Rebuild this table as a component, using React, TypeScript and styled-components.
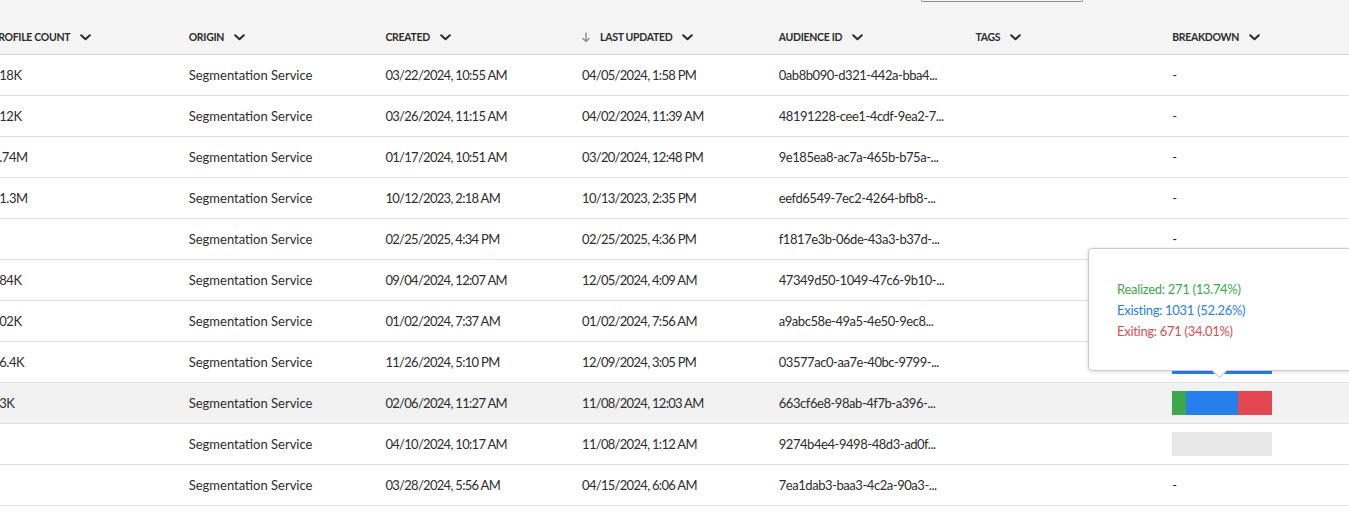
import React from "react";
import styled, { createGlobalStyle } from "styled-components";

const GlobalStyle = createGlobalStyle`
  html, body { margin: 0; padding: 0; background: #ffffff; overflow: hidden; }
  body { font-family: Lato, "Open Sans", sans-serif; color: #2c2c2c; }
`;

const COL = "196.7px";

const Page = styled.div`
  position: relative;
  width: 1349px;
  height: 512px;
  overflow: hidden;
  background: #ffffff;
`;

const Top = styled.div`
  background: #f5f5f5;
  height: 20px;
  display: flex;
`;

const SearchStub = styled.div`
  margin-left: 921px;
  width: 160px;
  height: 1px;
  border: 1px solid #8e8e8e;
  border-top: none;
  border-radius: 0 0 4px 4px;
`;

const Table = styled.div`
  margin-left: -8px;
  width: calc(${COL} * 7);
`;

const HeaderRow = styled.div`
  display: grid;
  grid-template-columns: repeat(7, ${COL});
  height: 34px;
  align-items: center;
  background: #f5f5f5;
  border-bottom: 1px solid #d3d3d3;
`;

const HeadCell = styled.div`
  display: flex;
  align-items: center;
  font-size: 10.5px;
  font-weight: 700;
  letter-spacing: -0.3px;
  color: #2c2c2c;
  text-transform: uppercase;
`;

const SortArrow = styled.span`
  display: inline-flex;
  width: 18px;
`;

const Chevron = styled.span`
  display: inline-flex;
  margin-left: 10px;
`;

const Row = styled.div<{ $hl?: boolean }>`
  display: grid;
  grid-template-columns: repeat(7, ${COL});
  height: 40px;
  align-items: center;
  background: ${(p) => (p.$hl ? "#f2f2f2" : "#ffffff")};
  border-bottom: 1px solid #e1e1e1;
`;

const Cell = styled.div<{ $tight?: number }>`
  font-size: 13px;
  letter-spacing: ${(p) => (p.$tight ? `-${p.$tight}px` : "0")};
  white-space: nowrap;
  overflow: hidden;
  color: #2c2c2c;
`;

const Bar = styled.div<{ $empty?: boolean }>`
  width: 100px;
  height: 24px;
  display: flex;
  background: ${(p) => (p.$empty ? "#e8e8e8" : "transparent")};
`;

const Seg = styled.div<{ $c: string }>`
  height: 100%;
  background: ${(p) => p.$c};
`;

const Tooltip = styled.div`
  position: absolute;
  left: 1088px;
  top: 248px;
  width: 290px;
  height: 123px;
  box-sizing: border-box;
  background: #ffffff;
  border: 1px solid #cacaca;
  border-radius: 4px;
  box-shadow: 0 1px 4px rgba(0, 0, 0, 0.15);
  padding: 30px 0 0 28px;
  display: flex;
  flex-direction: column;
`;

const Tip = styled.div`
  position: absolute;
  left: 125px;
  bottom: -6px;
  width: 10px;
  height: 10px;
  background: #ffffff;
  border-right: 1px solid #cacaca;
  border-bottom: 1px solid #cacaca;
  transform: rotate(45deg);
`;

const TipLine = styled.div<{ $c: string }>`
  font-size: 13px;
  letter-spacing: -0.3px;
  line-height: 21px;
  color: ${(p) => p.$c};
`;

const GREEN = "#3da74e";
const BLUE = "#2680eb";
const RED = "#e34850";

const ChevronIcon = () => (
  <svg width="11" height="7" viewBox="0 0 11 7">
    <path d="M1.2 1.2 L5.5 5.3 L9.8 1.2" fill="none" stroke="#2c2c2c" strokeWidth="2" strokeLinecap="round" strokeLinejoin="round" />
  </svg>
);

const DownArrow = () => (
  <svg width="8" height="11" viewBox="0 0 8 11">
    <path d="M4 1 V9.5 M1 6.5 L4 9.6 L7 6.5" fill="none" stroke="#8e8e8e" strokeWidth="1.4" strokeLinecap="round" strokeLinejoin="round" />
  </svg>
);

type Breakdown = "dash" | "full" | "blue" | "empty" | "none";

interface RowData {
  count: string;
  created: string;
  updated: string;
  id: string;
  breakdown: Breakdown;
}

const rows: RowData[] = [
  { count: "118K", created: "03/22/2024, 10:55 AM", updated: "04/05/2024, 1:58 PM", id: "0ab8b090-d321-442a-bba4...", breakdown: "dash" },
  { count: "112K", created: "03/26/2024, 11:15 AM", updated: "04/02/2024, 11:39 AM", id: "48191228-cee1-4cdf-9ea2-7...", breakdown: "dash" },
  { count: "1.74M", created: "01/17/2024, 10:51 AM", updated: "03/20/2024, 12:48 PM", id: "9e185ea8-ac7a-465b-b75a-...", breakdown: "dash" },
  { count: "11.3M", created: "10/12/2023, 2:18 AM", updated: "10/13/2023, 2:35 PM", id: "eefd6549-7ec2-4264-bfb8-...", breakdown: "dash" },
  { count: "", created: "02/25/2025, 4:34 PM", updated: "02/25/2025, 4:36 PM", id: "f1817e3b-06de-43a3-b37d-...", breakdown: "dash" },
  { count: "184K", created: "09/04/2024, 12:07 AM", updated: "12/05/2024, 4:09 AM", id: "47349d50-1049-47c6-9b10-...", breakdown: "none" },
  { count: "102K", created: "01/02/2024, 7:37 AM", updated: "01/02/2024, 7:56 AM", id: "a9abc58e-49a5-4e50-9ec8...", breakdown: "none" },
  { count: "16.4K", created: "11/26/2024, 5:10 PM", updated: "12/09/2024, 3:05 PM", id: "03577ac0-aa7e-40bc-9799-...", breakdown: "blue" },
  { count: "13K", created: "02/06/2024, 11:27 AM", updated: "11/08/2024, 12:03 AM", id: "663cf6e8-98ab-4f7b-a396-...", breakdown: "full" },
  { count: "", created: "04/10/2024, 10:17 AM", updated: "11/08/2024, 1:12 AM", id: "9274b4e4-9498-48d3-ad0f...", breakdown: "empty" },
  { count: "", created: "03/28/2024, 5:56 AM", updated: "04/15/2024, 6:06 AM", id: "7ea1dab3-baa3-4c2a-90a3-...", breakdown: "dash" },
];

const renderBreakdown = (b: Breakdown) => {
  switch (b) {
    case "dash":
      return "-";
    case "full":
      return (
        <Bar>
          <Seg $c={GREEN} style={{ width: "13.74%" }} />
          <Seg $c={BLUE} style={{ width: "52.26%" }} />
          <Seg $c={RED} style={{ width: "34.01%" }} />
        </Bar>
      );
    case "blue":
      return (
        <Bar>
          <Seg $c={BLUE} style={{ width: "100%" }} />
        </Bar>
      );
    case "empty":
      return <Bar $empty />;
    default:
      return null;
  }
};

const headers = ["Profile count", "Origin", "Created", "Last updated", "Audience ID", "Tags", "Breakdown"];

export default function App() {
  return (
    <Page>
      <GlobalStyle />
      <Top>
        <SearchStub />
      </Top>
      <Table>
        <HeaderRow>
          {headers.map((h) => (
            <HeadCell key={h}>
              {h === "Last updated" && (
                <SortArrow>
                  <DownArrow />
                </SortArrow>
              )}
              {h}
              <Chevron>
                <ChevronIcon />
              </Chevron>
            </HeadCell>
          ))}
        </HeaderRow>
        {rows.map((r, i) => (
          <Row key={r.id} $hl={i === 8}>
            <Cell $tight={0.4}>{r.count}</Cell>
            <Cell>Segmentation Service</Cell>
            <Cell $tight={0.7}>{r.created}</Cell>
            <Cell $tight={0.7}>{r.updated}</Cell>
            <Cell $tight={0.45}>{r.id}</Cell>
            <Cell />
            <Cell>{renderBreakdown(r.breakdown)}</Cell>
          </Row>
        ))}
      </Table>
      <Tooltip>
        <TipLine $c={GREEN}>Realized: 271 (13.74%)</TipLine>
        <TipLine $c={BLUE}>Existing: 1031 (52.26%)</TipLine>
        <TipLine $c={RED}>Exiting: 671 (34.01%)</TipLine>
        <Tip />
      </Tooltip>
    </Page>
  );
}
